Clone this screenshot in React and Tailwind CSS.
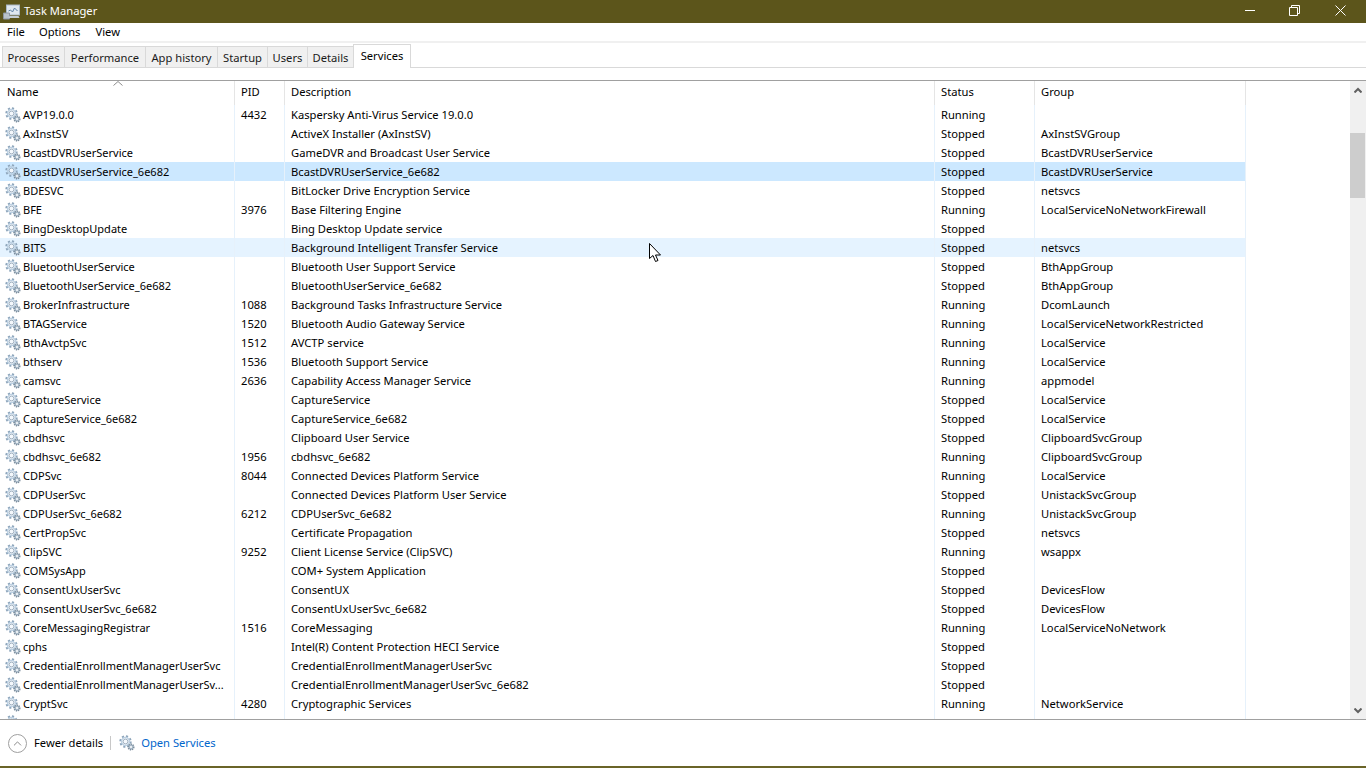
import { ChevronUp } from "lucide-react";

const rows = [
  ["AVP19.0.0", "4432", "Kaspersky Anti-Virus Service 19.0.0", "Running", ""],
  ["AxInstSV", "", "ActiveX Installer (AxInstSV)", "Stopped", "AxInstSVGroup"],
  ["BcastDVRUserService", "", "GameDVR and Broadcast User Service", "Stopped", "BcastDVRUserService"],
  ["BcastDVRUserService_6e682", "", "BcastDVRUserService_6e682", "Stopped", "BcastDVRUserService"],
  ["BDESVC", "", "BitLocker Drive Encryption Service", "Stopped", "netsvcs"],
  ["BFE", "3976", "Base Filtering Engine", "Running", "LocalServiceNoNetworkFirewall"],
  ["BingDesktopUpdate", "", "Bing Desktop Update service", "Stopped", ""],
  ["BITS", "", "Background Intelligent Transfer Service", "Stopped", "netsvcs"],
  ["BluetoothUserService", "", "Bluetooth User Support Service", "Stopped", "BthAppGroup"],
  ["BluetoothUserService_6e682", "", "BluetoothUserService_6e682", "Stopped", "BthAppGroup"],
  ["BrokerInfrastructure", "1088", "Background Tasks Infrastructure Service", "Running", "DcomLaunch"],
  ["BTAGService", "1520", "Bluetooth Audio Gateway Service", "Running", "LocalServiceNetworkRestricted"],
  ["BthAvctpSvc", "1512", "AVCTP service", "Running", "LocalService"],
  ["bthserv", "1536", "Bluetooth Support Service", "Running", "LocalService"],
  ["camsvc", "2636", "Capability Access Manager Service", "Running", "appmodel"],
  ["CaptureService", "", "CaptureService", "Stopped", "LocalService"],
  ["CaptureService_6e682", "", "CaptureService_6e682", "Stopped", "LocalService"],
  ["cbdhsvc", "", "Clipboard User Service", "Stopped", "ClipboardSvcGroup"],
  ["cbdhsvc_6e682", "1956", "cbdhsvc_6e682", "Running", "ClipboardSvcGroup"],
  ["CDPSvc", "8044", "Connected Devices Platform Service", "Running", "LocalService"],
  ["CDPUserSvc", "", "Connected Devices Platform User Service", "Stopped", "UnistackSvcGroup"],
  ["CDPUserSvc_6e682", "6212", "CDPUserSvc_6e682", "Running", "UnistackSvcGroup"],
  ["CertPropSvc", "", "Certificate Propagation", "Stopped", "netsvcs"],
  ["ClipSVC", "9252", "Client License Service (ClipSVC)", "Running", "wsappx"],
  ["COMSysApp", "", "COM+ System Application", "Stopped", ""],
  ["ConsentUxUserSvc", "", "ConsentUX", "Stopped", "DevicesFlow"],
  ["ConsentUxUserSvc_6e682", "", "ConsentUxUserSvc_6e682", "Stopped", "DevicesFlow"],
  ["CoreMessagingRegistrar", "1516", "CoreMessaging", "Running", "LocalServiceNoNetwork"],
  ["cphs", "", "Intel(R) Content Protection HECI Service", "Stopped", ""],
  ["CredentialEnrollmentManagerUserSvc", "", "CredentialEnrollmentManagerUserSvc", "Stopped", ""],
  ["CredentialEnrollmentManagerUserSv...", "", "CredentialEnrollmentManagerUserSvc_6e682", "Stopped", ""],
  ["CryptSvc", "4280", "Cryptographic Services", "Running", "NetworkService"],
  ["DcomLaunch", "1088", "DCOM Server Process Launcher", "Running", "DcomLaunch"],
];

const tabs = [
  ["Processes", "w-[62px]"],
  ["Performance", "w-[81px]"],
  ["App history", "w-[72px]"],
  ["Startup", "w-[50px]"],
  ["Users", "w-[40px]"],
  ["Details", "w-[46px]"],
];

const Gear = ({ className }) => (
  <svg viewBox="0 0 16 16" className={className} fill="none">
    <circle cx="6.500" cy="6.500" r="5" stroke="#8da5bb" strokeWidth="2.400" strokeDasharray="2 1.900" />
    <circle cx="6.500" cy="6.500" r="3.900" stroke="#bcd0e2" strokeWidth="1.500" />
    <circle cx="6.500" cy="6.500" r="2.400" fill="#f4f8fc" stroke="#7b91a6" strokeWidth="0.700" />
    <circle cx="12" cy="12" r="2.800" fill="#a9bac9" stroke="#7d8e9d" strokeWidth="1.500" strokeDasharray="1.200 0.900" />
    <circle cx="12" cy="12" r="1" fill="#fff" />
  </svg>
);

const Row = ({ row, bg }) => (
  <div className={`flex h-[19px] w-[1246px] shrink-0 items-center ${bg}`}>
    <div className="flex h-full w-[235px] items-center overflow-hidden border-r border-[#e6f1fb] pl-[5px]">
      <Gear className="mr-[2px] h-4 w-4 shrink-0" />
      <span className="pt-[2px] text-[11px] whitespace-nowrap">{row[0]}</span>
    </div>
    <div className="flex h-full w-[50px] items-center border-r border-[#e6f1fb] pt-[2px] pl-[6px]">{row[1]}</div>
    <div className="flex h-full w-[650px] items-center border-r border-[#e6f1fb] pt-[2px] pl-[6px]">{row[2]}</div>
    <div className="flex h-full w-[100px] items-center border-r border-[#e6f1fb] pt-[2px] pl-[6px]">{row[3]}</div>
    <div className="flex h-full w-[211px] items-center border-r border-[#e6f1fb] pt-[2px] pl-[6px]">{row[4]}</div>
  </div>
);

export default function App() {
  return (
    <div className="relative flex h-[768px] w-[1366px] flex-col overflow-hidden bg-white font-['Noto_Sans',sans-serif] text-[11.200px] text-black">
      {/* Title bar */}
      <div className="flex h-[23px] shrink-0 items-center bg-[#5c551b] pl-[2px] text-white">
        <svg viewBox="0 0 18 16" className="h-4 w-[19px]">
          <rect x="4" y="1" width="13" height="10" fill="#dfe8f0" stroke="#a9b8c6" />
          <path d="M6 7l2-1 2 2 2-4 3 3" stroke="#5a7fa5" fill="none" />
          <path d="M1 9h6v6H1z" fill="#b9c2ca" stroke="#8b95a0" />
          <path d="M7 12h9l1 2H6z" fill="#c5ced6" />
        </svg>
        <span className="ml-[3px]">Task Manager</span>
        <div className="ml-auto flex items-center pb-[2px]">
          <div className="mr-[34px] h-px w-[10px] bg-white" />
          <svg viewBox="0 0 11 11" className="mr-[35px] h-[11px] w-[11px]" fill="none" stroke="#fff">
            <path d="M.5 2.500h8v8h-8z" /><path d="M2.500 2.500v-2h8v8H8.500" />
          </svg>
          <svg viewBox="0 0 11 11" className="mr-[20px] h-[11px] w-[11px]" fill="none" stroke="#fff"><path d="M.5.5l10 10M10.500.5l-10 10" /></svg>
        </div>
      </div>

      {/* Menu */}
      <div className="flex h-[18px] shrink-0 items-center pt-px pl-[7px]">
        <span>File</span><span className="ml-[14px]">Options</span><span className="ml-[15px]">View</span>
      </div>
      <div className="h-[2px] shrink-0 bg-[#f0f0f0]" />

      {/* Tabs */}
      <div className="flex h-[25px] shrink-0 items-end border-b border-[#d9d9d9] pl-[2px]">
        {tabs.map(([name, width]) => (
          <div key={name} className={`flex h-[21px] ${width} items-center justify-center border-t border-l border-[#d9d9d9] bg-[#f0f0f0] pt-[3px] text-[#1a1a1a]`}>
            {name}
          </div>
        ))}
        <div className="-mb-px flex h-[24px] w-[58px] items-start justify-center border border-b-0 border-[#d9d9d9] bg-white pt-[3px]">
          Services
        </div>
      </div>
      <div className="h-[12px] shrink-0" />

      {/* Table */}
      <div className="flex min-h-0 flex-1 border-y border-[#a0a0a0]">
        <div className="flex min-w-0 flex-1 flex-col overflow-hidden">
          <div className="flex h-[24px] w-[1246px] shrink-0 items-center">
            <div className="h-full w-[235px] border-r border-[#e5e5e5] pl-[7px] leading-[22px]">Name</div>
            <div className="h-full w-[50px] border-r border-[#e5e5e5] pl-[6px] leading-[22px]">PID</div>
            <div className="h-full w-[650px] border-r border-[#e5e5e5] pl-[6px] leading-[22px]">Description</div>
            <div className="h-full w-[100px] border-r border-[#e5e5e5] pl-[6px] leading-[22px]">Status</div>
            <div className="h-full w-[211px] border-r border-[#e5e5e5] pl-[6px] leading-[22px]">Group</div>
          </div>
          {rows.map((row, i) => (
            <Row key={row[0]} row={row} bg={i === 3 ? "bg-[#cce8ff]" : i === 7 ? "bg-[#e5f3ff]" : ""} />
          ))}
        </div>
        {/* Scrollbar */}
        <div className="flex w-[16px] shrink-0 flex-col items-center bg-[#f0f0f0]">
          <svg viewBox="0 0 8 6" className="mt-[6px] h-[6px] w-2 shrink-0" fill="none" stroke="#606060" strokeWidth="2"><path d="M.5 5.500L4 2l3.500 3.500" /></svg>
          <div className="mt-[40px] ml-[-1px] h-[65px] w-[15px] shrink-0 bg-[#cdcdcd]" />
          <svg viewBox="0 0 8 6" className="mt-auto mb-[5px] h-[6px] w-2 shrink-0" fill="none" stroke="#606060" strokeWidth="2"><path d="M.5.5L4 4l3.500-3.500" /></svg>
        </div>
      </div>

      {/* Footer */}
      <div className="flex h-[46px] shrink-0 items-center pl-[8px]">
        <div className="flex h-[19px] w-[19px] items-center justify-center rounded-full border border-[#a0a0a0]">
          <ChevronUp size={13} strokeWidth={1.5} className="text-[#707070]" />
        </div>
        <span className="ml-[7px] pt-px">Fewer details</span>
        <div className="ml-[7px] h-[14px] w-px bg-[#c8c8c8]" />
        <Gear className="ml-[8px] h-4 w-4" />
        <span className="ml-[6px] pt-px text-[#0066cc]">Open Services</span>
      </div>
      <div className="h-[2px] shrink-0 bg-[#6a6428]" />

      {/* Sort arrow */}
      <svg viewBox="0 0 10 5" className="absolute top-[81px] left-[113px] h-[5px] w-[10px]" fill="none" stroke="#8c8c8c"><path d="M.5 4.500L5 .5l4.500 4" /></svg>

      {/* Mouse pointer */}
      <svg viewBox="0 0 14 20" className="absolute top-[243px] left-[649px] h-[20px] w-[14px]">
        <path d="M.5.5v15l3.500-3 2.500 6 2.500-1-2.500-5.500h5z" fill="#fff" stroke="#000" strokeWidth="1" />
      </svg>
    </div>
  );
}
